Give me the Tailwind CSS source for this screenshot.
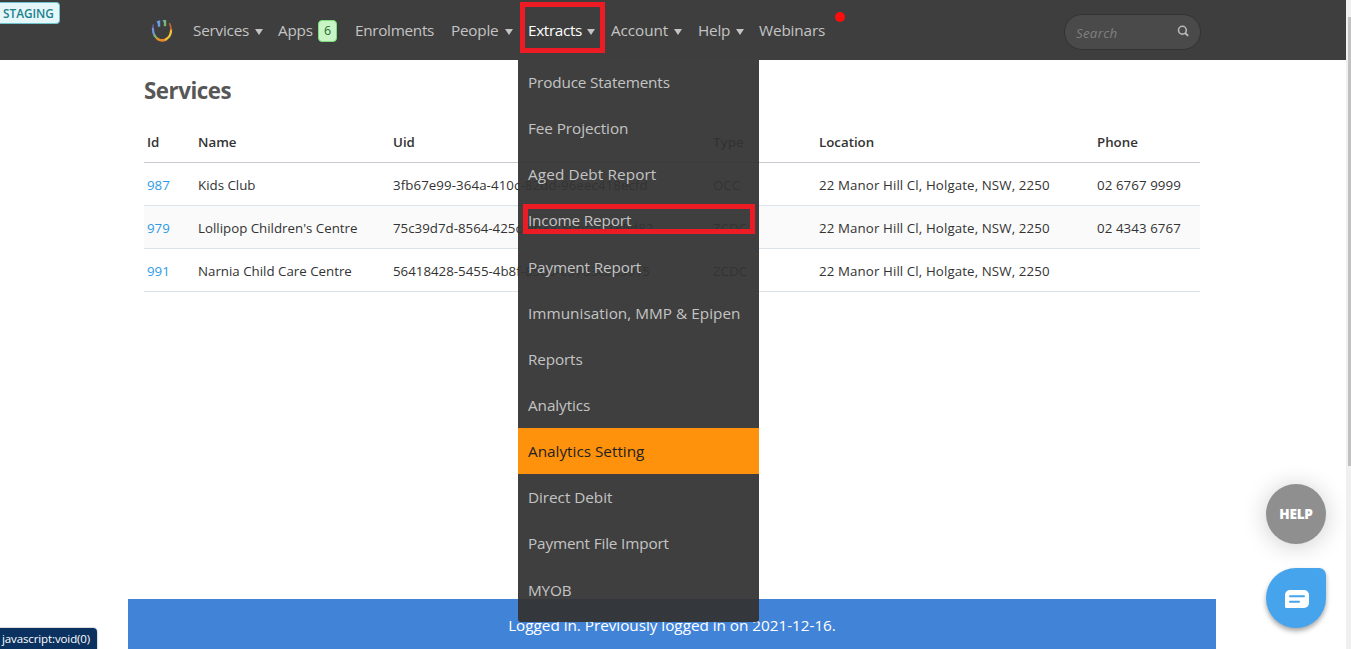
<!DOCTYPE html>
<html lang="en">
<head>
    <meta charset="UTF-8">
    <meta name="viewport" content="width=device-width, initial-scale=1.0">
    <title>Services</title>
    <script src="https://cdn.jsdelivr.net/npm/@tailwindcss/browser@4"></script>
</head>
<body class="relative flex h-screen overflow-hidden bg-white font-['Segoe_UI','Open_Sans',sans-serif] text-[#333]">
    <div class="flex flex-1 flex-col min-w-0">
        <!-- Top navigation -->
        <header class="h-[60px] shrink-0 bg-[#3e3e3e]">
            <div class="flex h-full items-center pl-[150px] pr-[145px]">
                <a href="#" class="mr-[18px] mt-[2px] w-[25px] shrink-0">
                    <svg class="h-[25px] w-[25px]" viewBox="0 0 25 25" fill="none" stroke-width="2.2" stroke-linecap="round">
                        <path d="M3.300 6C2.600 8 2.600 9.500 2.800 11" stroke="#6a5aa8" stroke-width="1.500"/>
                        <path d="M2.900 9.500C2.900 12.500 3.300 14.500 4.600 16.500" stroke="#7194d8"/>
                        <path d="M4.600 16.500C5.500 18 6.400 19 7.800 20" stroke="#86b35f"/>
                        <path d="M7.800 20C10 21.500 13.500 21.700 16 20.300" stroke="#e98a2b" stroke-width="2.600"/>
                        <path d="M16 20.300C19.500 18.200 21.200 14.500 21.100 10.500" stroke="#f5c433"/>
                        <path d="M21.100 10.500C21.100 8.500 20.800 6.800 19.700 4.800" stroke="#c8642c" stroke-width="1.700"/>
                        <path d="M7 3.400L9 2.800V7.800" stroke="#6c9be0" stroke-linecap="butt" stroke-width="2.400"/>
                        <path d="M12.800 2.300L15 1.700" stroke="#5a8fc9" stroke-linecap="butt"/>
                        <path d="M15 1V7.200" stroke="#78b77a" stroke-width="2.400" stroke-linecap="butt"/>
                    </svg>
                </a>
                <nav class="relative z-20 flex h-full items-center text-[15.3px] leading-5 tracking-[-0.015em] whitespace-nowrap text-[#c4c4c4]">
                    <a href="#" class="flex w-[85px] items-center"><span class="w-[62px]">Services</span><svg class="mt-1 h-[6px] w-[8px]" viewBox="0 0 8 6" fill="#c4c4c4"><path d="M0 0h8L4 6z"/></svg></a>
                    <a href="#" class="flex w-[77px] items-center"><span class="w-10">Apps</span><span class="mt-px flex h-[22px] w-[19px] items-center justify-center rounded border border-[#7be07b] bg-[#c9f5c6] text-[12.5px] text-[#256b2c]">6</span></a>
                    <a href="#" class="w-[96px] tracking-[-0.02em]">Enrolments</a>
                    <a href="#" class="flex w-[77px] items-center"><span class="w-[54px]">People</span><svg class="mt-1 h-[6px] w-[8px]" viewBox="0 0 8 6" fill="#c4c4c4"><path d="M0 0h8L4 6z"/></svg></a>
                    <div class="relative flex h-full w-[83px] items-center">
                        <a href="#" class="flex items-center text-white"><span class="w-[59px] tracking-[-0.023em]">Extracts</span><svg class="mt-1 h-[6px] w-[8px]" viewBox="0 0 8 6" fill="#c4c4c4"><path d="M0 0h8L4 6z"/></svg></a>
                        <div class="absolute top-[2px] -left-2 h-[51px] w-[85px] border-5 border-[#ed1c24]"></div>
                        <!-- Extracts menu -->
                        <ul class="absolute top-[60px] -left-[10px] h-[562px] w-[241px] rounded-b-[3px] bg-[#333333]/94 tracking-[-0.01em] *:flex *:h-[46.15px] *:items-center *:px-[10px]">
                            <li class="-mt-px">Produce Statements</li>
                            <li class="tracking-[-0.005em]">Fee Projection</li>
                            <li class="tracking-[0.007em]">Aged Debt Report</li>
                            <li class="relative">Income Report<div class="absolute top-[7px] left-[5px] h-[30px] w-[232px] border-5 border-[#ed1c24]"></div></li>
                            <li>Payment Report</li>
                            <li class="tracking-[0.002em]">Immunisation, MMP &amp; Epipen</li>
                            <li>Reports</li>
                            <li class="tracking-[-0.005em]">Analytics</li>
                            <li class="bg-[#ff920d] tracking-[0em] text-[#222]">Analytics Setting</li>
                            <li class="tracking-[-0.003em]">Direct Debit</li>
                            <li>Payment File Import</li>
                            <li>MYOB</li>
                        </ul>
                    </div>
                    <a href="#" class="flex w-[87px] items-center"><span class="w-[63px] tracking-[-0.005em]">Account</span><svg class="mt-1 h-[6px] w-[8px]" viewBox="0 0 8 6" fill="#c4c4c4"><path d="M0 0h8L4 6z"/></svg></a>
                    <a href="#" class="flex w-[61px] items-center"><span class="w-[38px]">Help</span><svg class="mt-1 h-[6px] w-[8px]" viewBox="0 0 8 6" fill="#c4c4c4"><path d="M0 0h8L4 6z"/></svg></a>
                    <a href="#" class="w-[76px] tracking-[-0.01em]">Webinars</a>
                    <span class="mb-[26px] size-[10px] rounded-full bg-[#ff0d0d]"></span>
                </nav>
                <div class="mt-[4px] ml-auto flex h-9 w-[137px] items-center justify-between rounded-full border border-[#333] bg-[#4a4a4a] pl-[11px] pr-[11px]">
                    <span class="mt-[3px] text-[13.3px] tracking-[0.02em] text-[#808080] italic">Search</span>
                    <svg class="mb-[2px] h-[12px] w-[12px]" viewBox="0 0 12 12" fill="none" stroke="#b8b8b8" stroke-width="1.600"><circle cx="5.4" cy="5.2" r="3.9"/><path d="M8.2 8l2.9 2.9" stroke-width="2"/></svg>
                </div>
            </div>
        </header>

        <main class="flex-1 pl-[144px] pr-[146px] pt-[16px]">
            <h1 class="h-[46px] text-[22.3px] leading-[30px] font-bold tracking-[-0.02em] text-[#575757]">Services</h1>
            <table class="w-[1056px] table-fixed border-separate border-spacing-0 text-left text-[13.3px] leading-5 whitespace-nowrap">
                <colgroup>
                    <col class="w-[51px]"><col class="w-[195px]"><col class="w-[320px]"><col class="w-[106px]"><col class="w-[278px]"><col class="w-[106px]">
                </colgroup>
                <thead>
                    <tr class="h-[41px] *:border-b *:border-[#c8c9d2] *:pl-[3px] *:font-semibold">
                        <th>Id</th><th>Name</th><th>Uid</th><th>Type</th><th>Location</th><th>Phone</th>
                    </tr>
                </thead>
                <tbody class="*:h-[43px] *:even:bg-[#fafafa] [&_td]:border-b [&_td]:border-[#dbe2e9] [&_td]:pt-[2px] [&_td]:pl-[3px]">
                    <tr>
                        <td class="text-[#2e9be6]">987</td><td>Kids Club</td><td class="tracking-[0.006em]">3fb67e99-364a-410c-82dd-96eec418ecfd</td><td>OCC</td><td class="tracking-[0.008em]">22 Manor Hill Cl, Holgate, NSW, 2250</td><td class="tracking-[0.006em]">02 6767 9999</td>
                    </tr>
                    <tr>
                        <td class="text-[#2e9be6]">979</td><td>Lollipop Children's Centre</td><td>75c39d7d-8564-425c-9b32-50bbdc165d82</td><td>ZCDC</td><td class="tracking-[0.008em]">22 Manor Hill Cl, Holgate, NSW, 2250</td><td class="tracking-[0.006em]">02 4343 6767</td>
                    </tr>
                    <tr>
                        <td class="text-[#2e9be6]">991</td><td>Narnia Child Care Centre</td><td>56418428-5455-4b8f-85b0-e3783c803915</td><td>ZCDC</td><td class="tracking-[0.008em]">22 Manor Hill Cl, Holgate, NSW, 2250</td><td></td>
                    </tr>
                </tbody>
            </table>
        </main>

        <footer class="mr-[130px] ml-[128px] flex h-[50px] shrink-0 items-center justify-center bg-[#4183d7] pt-[3px] text-[15.3px] tracking-[-0.002em] text-white">
            <p>Logged in. Previously logged in on 2021-12-16.</p>
        </footer>
    </div>

    <!-- Scrollbar -->
    <div class="w-[5px] shrink-0 bg-[#f0f0f0] pt-[17px] pl-[2px]">
        <div class="h-[449px] bg-[#c1c1c1]"></div>
    </div>

    <!-- Floating elements -->
    <div class="absolute top-[2px] left-0 flex h-[22px] w-[60px] items-center rounded-r border border-l-0 border-[#6fc5cf] bg-[#e6f7f9] pt-px pl-[3px] text-[11.8px] font-semibold text-[#20808c]">STAGING</div>
    <div class="absolute top-[484px] left-[1266px] flex size-[60px] items-center justify-center rounded-full bg-[#8f8f8f] text-[13.6px] font-extrabold tracking-[-0.02em] text-white shadow-[0_2px_24px_rgba(0,0,0,0.2)]">HELP</div>
    <div class="absolute top-[568px] left-[1266px] flex size-[60px] items-center justify-center rounded-[30px_7px_30px_30px] bg-[#46a4ed] pt-[2px] pl-[2px] shadow-[0_3px_5px_rgba(0,0,0,0.35)]">
        <svg class="h-[18px] w-[24px]" viewBox="0 0 24 18"><path d="M5 0h14a5 5 0 0 1 5 5v8a5 5 0 0 1-5 5H1.500a1.500 1.500 0 0 1-1.500-1.500V5a5 5 0 0 1 5-5z" fill="#fff"/><path d="M5 6.200h14M5 11.800h9" stroke="#46a4ed" stroke-width="2" stroke-linecap="round"/></svg>
    </div>
    <div class="absolute bottom-0 left-0 flex h-[21px] w-[97px] items-center rounded-tr bg-[#0b3160] pl-[2px] text-[11.5px] tracking-[-0.01em] text-white shadow-[0_0_1px_1px_rgba(0,0,0,0.15)]">javascript:void(0)</div>
</body>
</html>
